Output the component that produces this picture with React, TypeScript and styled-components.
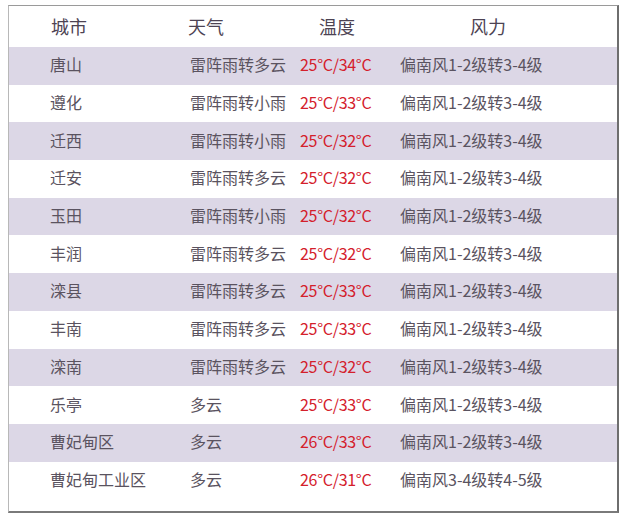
import React from 'react';
import styled, { createGlobalStyle } from 'styled-components';

interface Row {
  city: string;
  weather: string;
  temp: string;
  wind: string;
}

const rows: Row[] = [
  { city: '唐山', weather: '雷阵雨转多云', temp: '25°C/34°C', wind: '偏南风1-2级转3-4级' },
  { city: '遵化', weather: '雷阵雨转小雨', temp: '25°C/33°C', wind: '偏南风1-2级转3-4级' },
  { city: '迁西', weather: '雷阵雨转小雨', temp: '25°C/32°C', wind: '偏南风1-2级转3-4级' },
  { city: '迁安', weather: '雷阵雨转多云', temp: '25°C/32°C', wind: '偏南风1-2级转3-4级' },
  { city: '玉田', weather: '雷阵雨转小雨', temp: '25°C/32°C', wind: '偏南风1-2级转3-4级' },
  { city: '丰润', weather: '雷阵雨转多云', temp: '25°C/32°C', wind: '偏南风1-2级转3-4级' },
  { city: '滦县', weather: '雷阵雨转多云', temp: '25°C/33°C', wind: '偏南风1-2级转3-4级' },
  { city: '丰南', weather: '雷阵雨转多云', temp: '25°C/33°C', wind: '偏南风1-2级转3-4级' },
  { city: '滦南', weather: '雷阵雨转多云', temp: '25°C/32°C', wind: '偏南风1-2级转3-4级' },
  { city: '乐亭', weather: '多云', temp: '25°C/33°C', wind: '偏南风1-2级转3-4级' },
  { city: '曹妃甸区', weather: '多云', temp: '26°C/33°C', wind: '偏南风1-2级转3-4级' },
  { city: '曹妃甸工业区', weather: '多云', temp: '26°C/31°C', wind: '偏南风3-4级转4-5级' },
];

const App = () => (
  <>
    <GlobalStyle />
    <Frame>
      <HeaderRow>
        <HeadCell>城市</HeadCell>
        <HeadCell $shift={-3}>天气</HeadCell>
        <HeadCell $shift={18}>温度</HeadCell>
        <HeadCell $shift={69}>风力</HeadCell>
      </HeaderRow>
      {rows.map((row, i) => (
        <BodyRow key={row.city} $shaded={i % 2 === 0}>
          <Cell>{row.city}</Cell>
          <Cell>{row.weather}</Cell>
          <TempCell>{row.temp}</TempCell>
          <Cell>{row.wind}</Cell>
        </BodyRow>
      ))}
    </Frame>
  </>
);

export default App;

const GlobalStyle = createGlobalStyle`
  body {
    margin: 0;
    background: #fff;
    font-family: "Noto Sans CJK SC", "Noto Sans", sans-serif;
  }
`;

const Frame = styled.div`
  margin: 5px 0 0 8px;
  width: 611px;
  height: 508px;
  box-sizing: border-box;
  border-top: 1px solid #9a9a9a;
  border-left: 1px solid #b8b8b8;
  border-right: 2px solid #6e6e6e;
  border-bottom: 2px solid #7a7a7a;
  background: #fff;
`;

const columns = '140px 110px 100px 1fr';

const HeaderRow = styled.div`
  display: grid;
  grid-template-columns: ${columns};
  height: 41px;
  align-items: center;
  padding-left: 42px;
  padding-bottom: 2px;
  box-sizing: border-box;
`;

const HeadCell = styled.div<{ $shift?: number }>`
  padding-left: ${p => Math.max(p.$shift ?? 0, 0)}px;
  margin-left: ${p => Math.min(p.$shift ?? 0, 0)}px;
  font-size: 18px;
  color: #4d4353;
  white-space: nowrap;
`;

const BodyRow = styled.div<{ $shaded: boolean }>`
  display: grid;
  grid-template-columns: ${columns};
  height: 37.7px;
  align-items: center;
  padding-left: 41px;
  padding-bottom: 3px;
  box-sizing: border-box;
  background: ${p => (p.$shaded ? '#dcd7e6' : '#fff')};
`;

const Cell = styled.div`
  font-size: 16px;
  color: #5a5360;
  white-space: nowrap;
`;

const TempCell = styled(Cell)`
  color: #d4202c;
  letter-spacing: -0.3px;
`;
